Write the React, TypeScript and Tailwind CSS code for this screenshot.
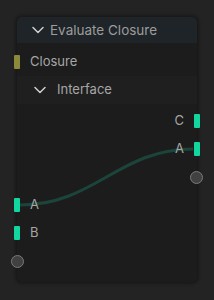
import React from 'react';

const font = { fontFamily: 'Inter, "DejaVu Sans", sans-serif' };

function Chevron({ className = '' }: { className?: string }) {
  return (
    <svg width="12" height="8" viewBox="0 0 12 8" className={className}>
      <path d="M1 1.5 L6 6.5 L11 1.5" fill="none" stroke="#cfcfcf" strokeWidth="1.5" strokeLinecap="round" strokeLinejoin="round" />
    </svg>
  );
}

function Bar({ color }: { color: string }) {
  return <div className="w-[6px] h-[14px] shrink-0 rounded-[1px]" style={{ background: color }} />;
}

function Dot() {
  return <div className="w-[13px] h-[13px] shrink-0 rounded-full bg-[#414141] border border-[#7a7a7a]" />;
}

export default function App() {
  return (
    <div className="w-[214px] h-[300px] bg-[#232323] pt-[17px] pl-[17px]" style={font}>
      <div className="relative w-[180px] h-[265px] rounded-[5px] bg-[#1c1c1c] shadow-[0_0_3px_2px_rgba(0,0,0,0.3)] flex flex-col text-[13px] text-[#a6a6a6]">
        {/* link curve */}
        <svg className="absolute left-[-17px] top-[-17px] pointer-events-none" width="214" height="300">
          <path d="M20 205 C 95 205, 118 149, 193 149" fill="none" stroke="#1b443a" strokeWidth="3" />
        </svg>

        {/* Header */}
        <div className="relative h-[26px] flex items-center gap-[6px] pl-[15px] rounded-t-[5px] bg-[#1f2428] text-[#9c9c9c] text-[13.5px]">
          <Chevron />
          <span>Evaluate Closure</span>
        </div>

        <div className="h-[5px]" />

        {/* Closure input */}
        <div className="relative h-[28px] flex items-center gap-[10px] -ml-[3px]">
          <Bar color="#8a8a3a" />
          <span>Closure</span>
        </div>

        {/* Interface panel */}
        <div className="relative h-[28px] flex items-center gap-[11px] pl-[17px] bg-[#1f1f1f]">
          <Chevron />
          <span>Interface</span>
        </div>

        <div className="h-[3px]" />

        {/* outputs */}
        <div className="relative h-[28px] flex items-center justify-end gap-[10px] -mr-[3px]">
          <span>C</span>
          <Bar color="#12d6a0" />
        </div>
        <div className="relative h-[28px] flex items-center justify-end gap-[10px] -mr-[3px]">
          <span>A</span>
          <Bar color="#12d6a0" />
        </div>
        <div className="relative h-[28px] flex items-center justify-end -mr-[6px]">
          <Dot />
        </div>

        {/* inputs */}
        <div className="relative h-[28px] flex items-center gap-[10px] -ml-[3px]">
          <Bar color="#12d6a0" />
          <span>A</span>
        </div>
        <div className="relative h-[28px] flex items-center gap-[10px] -ml-[3px]">
          <Bar color="#12d6a0" />
          <span>B</span>
        </div>
        <div className="relative h-[28px] flex items-center -ml-[6px]">
          <Dot />
        </div>
      </div>
    </div>
  );
}
